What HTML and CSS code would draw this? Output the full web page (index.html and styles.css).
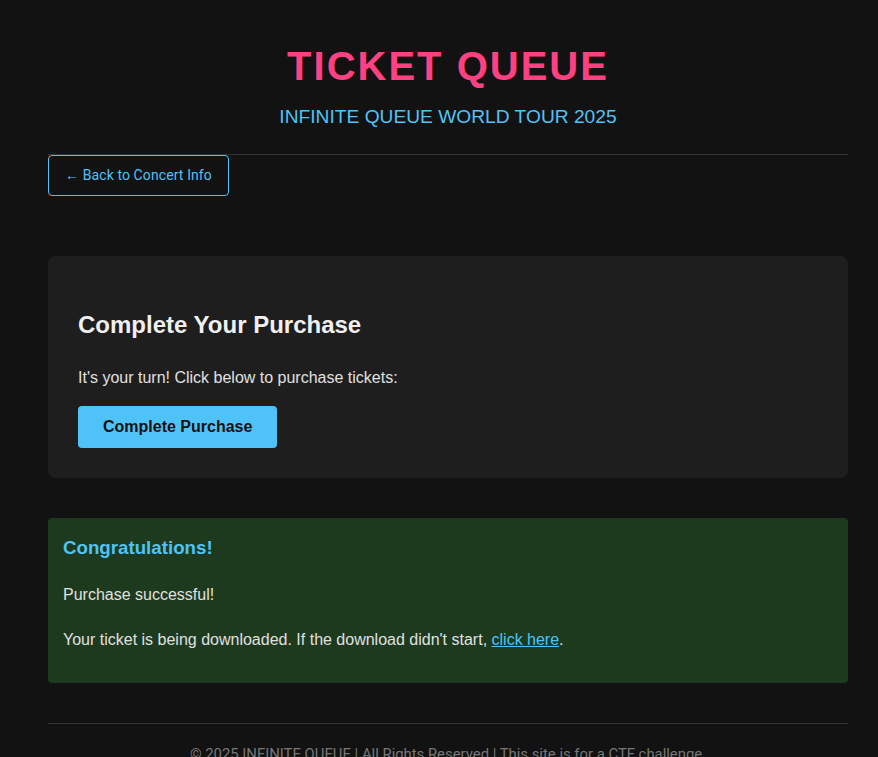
FILE: index.html
```html
<!DOCTYPE html>
<html lang="en">
<head>
<meta charset="utf-8">
<title>Ticket Queue</title>
<link rel="stylesheet" href="styles.css">
</head>
<body>
<div class="container">
  <header class="header">
    <h1 class="title">TICKET QUEUE</h1>
    <p class="subtitle">INFINITE QUEUE WORLD TOUR 2025</p>
  </header>
  <a class="back-btn" href="#">← Back to Concert Info</a>

  <section class="card">
    <h2 class="card-title">Complete Your Purchase</h2>
    <p class="card-text">It's your turn! Click below to purchase tickets:</p>
    <button class="buy-btn" type="button">Complete Purchase</button>
  </section>

  <section class="success">
    <h3 class="success-title">Congratulations!</h3>
    <p class="success-line first">Purchase successful!</p>
    <p class="success-line last">Your ticket is being downloaded. If the download didn't start, <a class="link" href="#">click here</a>.</p>
  </section>

  <footer class="footer">
    <p class="footer-text">© 2025 INFINITE QUEUE | All Rights Reserved | This site is for a CTF challenge.</p>
  </footer>
</div>
</body>
</html>
```
FILE: styles.css
```css
html, body {
  margin: 0;
  padding: 0;
  background: #121212;
}
body {
  font-family: "Liberation Sans", Arial, sans-serif;
  color: #e0e0e0;
  line-height: 1.6;
  font-size: 16px;
}
.container {
  width: 800px;
  margin-left: 48px;
  padding-top: 34px;
}
.header {
  text-align: center;
  border-bottom: 1px solid #333;
  padding-bottom: 21px;
}
.title {
  margin: 0;
  font-size: 40px;
  font-weight: bold;
  letter-spacing: 2px;
  color: #ff4081;
  line-height: 64px;
}
.subtitle {
  margin: 4px 0 0;
  font-size: 19.2px;
  color: #4fc3f7;
}
.back-btn {
  display: inline-block;
  padding: 8px 16px 9px;
  border: 1px solid #4fc3f7;
  border-radius: 4px;
  color: #4fc3f7;
  text-decoration: none;
  font-family: Roboto, "Liberation Sans", sans-serif;
  font-size: 14px;
  line-height: 1.6;
  letter-spacing: 0.1px;
}
.card {
  margin-top: 60px;
  background: #1e1e1e;
  border-radius: 8px;
  padding: 30px;
}
.card-title {
  margin: 20px 0 20px;
  font-size: 24px;
  color: #f0f0f0;
}
.card-text {
  margin: 0 0 16px;
}
.buy-btn {
  display: block;
  background: #4fc3f7;
  color: #121212;
  border: none;
  border-radius: 4px;
  padding: 12px 25px;
  font-family: "Liberation Sans", Arial, sans-serif;
  font-size: 16px;
  font-weight: bold;
  line-height: 18px;
  cursor: pointer;
}
.success {
  margin-top: 40px;
  background: #1d3a1e;
  border-radius: 4px;
  padding: 15px;
}
.success-title {
  margin: 0 0 18.7px;
  font-size: 18.72px;
  color: #4fc3f7;
}
.success-line {
  margin: 0;
}
.success-line.first {
  margin-bottom: 20px;
}
.success-line.last {
  margin-bottom: 15px;
}
.link {
  color: #4fc3f7;
  text-decoration: underline;
}
.footer {
  margin-top: 40px;
  border-top: 1px solid #333;
  padding-top: 19px;
  text-align: center;
}
.footer-text {
  margin: 0;
  font-family: Roboto, "Liberation Sans", sans-serif;
  font-size: 14.85px;
  color: #777;
}
```
